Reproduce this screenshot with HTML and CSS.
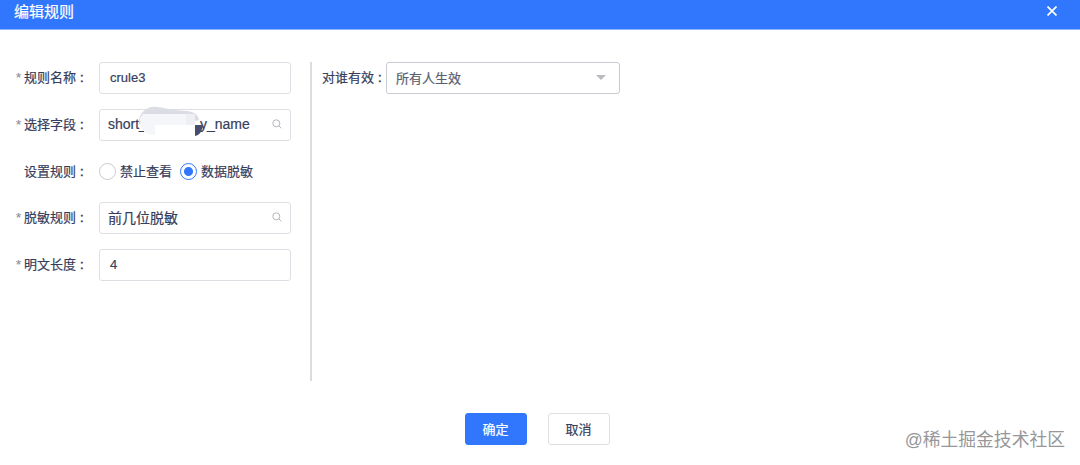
FILE: index.html
```
<!DOCTYPE html>
<html lang="zh-CN">
<head>
  <meta charset="UTF-8" />
  <meta name="viewport" content="width=device-width, initial-scale=1.0"/>
  <title>编辑规则</title>
  <link rel="stylesheet" href="styles.css">
</head>
<body>
<div class="dialog">
  <div class="dialog-header">
    <span class="title">编辑规则</span>
    <svg class="close" viewBox="0 0 10 10"><path d="M0.5 0.5 L9.5 9.5 M9.5 0.5 L0.5 9.5"/></svg>
  </div>

  <div class="dialog-body">
    <div class="form">
      <div class="form-item">
        <div class="label"><span class="star">*</span>规则名称<span class="colon">:</span></div>
        <div class="input"><span>crule3</span></div>
      </div>
      <div class="form-item">
        <div class="label"><span class="star">*</span>选择字段<span class="colon">:</span></div>
        <div class="input search">
          <span class="field-start">short_</span><span class="field-end">y_name</span>
          <svg class="icon" viewBox="0 0 10 10"><circle cx="4.3" cy="4.3" r="3.5"/><path d="M6.9 6.9 L9.3 9.3"/></svg>
          <svg class="mask" viewBox="0 0 70 34">
            <path fill="#fff" d="M5 9 H61 V30 H10 L5 20 Z"/>
            <path fill="#dcdde4" d="M3 19 C2 11 7 4 15 2 C23 1 29 4 38 5 L51 6 C58 7 62 9 63 15 L59 16 V9 H7 V19 Z"/>
            <path fill="#f5f6f9" d="M4 13 L7 9 H50 V20 H19 V30 C12 30 7 27 5 22 Z"/>
            <path fill="#eeeff4" d="M50 9 H59 V20 H50 Z"/>
            <path fill="#474d6b" d="M59 20 H67 C66 26 64 30 59 31 Z"/>
          </svg>
        </div>
      </div>
      <div class="form-item">
        <div class="label">设置规则<span class="colon">:</span></div>
        <div class="radios">
          <span class="radio"></span><span class="radio-text">禁止查看</span>
          <span class="radio checked"></span><span class="radio-text">数据脱敏</span>
        </div>
      </div>
      <div class="form-item">
        <div class="label"><span class="star">*</span>脱敏规则<span class="colon">:</span></div>
        <div class="input search">
          <span>前几位脱敏</span>
          <svg class="icon" viewBox="0 0 10 10"><circle cx="4.3" cy="4.3" r="3.5"/><path d="M6.9 6.9 L9.3 9.3"/></svg>
        </div>
      </div>
      <div class="form-item">
        <div class="label"><span class="star">*</span>明文长度<span class="colon">:</span></div>
        <div class="input"><span>4</span></div>
      </div>
    </div>

    <div class="scope">
      <div class="scope-label">对谁有效<span class="colon">:</span></div>
      <div class="select"><span>所有人生效</span><i class="arrow"></i></div>
    </div>
  </div>

  <div class="dialog-footer">
    <button class="button primary">确定</button>
    <button class="button">取消</button>
  </div>

  <div class="watermark">@稀土掘金技术社区</div>
</div>
</body>
</html>
```
FILE: styles.css
```
:root {
  --primary-color: #3177fd;
  --text-color: #373d5c;
  --border-color: #dcdfe3;
}

* {
  box-sizing: border-box;
}

body {
  margin: 0;
  font-family: "Liberation Sans", "Noto Sans CJK SC", sans-serif;
  font-size: 13px;
  color: var(--text-color);
  background: #fff;
  -webkit-text-stroke: 0.2px;
}

.dialog {
  position: relative;
  height: 465px;
  overflow: hidden;
}

.dialog-header {
  display: flex;
  justify-content: space-between;
  height: 30px;
  padding: 0 23px 0 14px;
  background: var(--primary-color);
  border-bottom: 1px solid #8fb4fc;
}

.title {
  font-size: 15px;
  line-height: 23px;
  color: #fff;
}

.close {
  width: 10px;
  height: 10px;
  margin-top: 6px;
}

.close path {
  stroke: #fff;
  stroke-width: 1.7;
}

.dialog-body {
  display: flex;
  height: 319px;
  margin-top: 32px;
}

.form {
  display: flex;
  flex-direction: column;
  gap: 14.8px;
  width: 312px;
  border-right: 2px solid #dadce1;
}

.form-item {
  display: flex;
  align-items: center;
  height: 32px;
}

.label {
  display: flex;
  justify-content: flex-end;
  align-items: center;
  width: 84px;
  margin-right: 15px;
  line-height: 20px;
  white-space: nowrap;
}

.star {
  margin-right: 3px;
  color: #8f929d;
}

.colon {
  width: 4px;
  margin-left: 4px;
  -webkit-text-stroke: 0.5px;
}

.input {
  position: relative;
  display: flex;
  align-items: center;
  width: 192px;
  height: 32px;
  padding: 0 8px 0 10px;
  border: 1px solid var(--border-color);
  border-radius: 3px;
}

.input span {
  padding-bottom: 2px;
}

.input.search {
  padding-left: 8px;
  font-size: 14px;
}

.input.search span {
  padding-bottom: 3px;
}

.input .field-start,
.input .field-end {
  padding-top: 1px;
}

.icon {
  width: 10px;
  height: 10px;
  margin-left: auto;
  margin-bottom: 2px;
  fill: none;
  stroke: #b4b6be;
  stroke-width: 1;
}

.field-end {
  margin-left: 53px;
}

/* smudge over the middle of the field name */
.mask {
  position: absolute;
  left: 36px;
  top: -5px;
  width: 70px;
  height: 34px;
}

.radios {
  display: flex;
  align-items: center;
  padding-bottom: 1px;
}

.radio {
  width: 17px;
  height: 17px;
  margin-right: 4px;
  border: 1px solid #c9cbd0;
  border-radius: 50%;
}

.radio-text {
  padding-bottom: 2px;
}

.radio.checked {
  margin-left: 8px;
  border-color: var(--primary-color);
  background: radial-gradient(circle, var(--primary-color) 4px, #fff 5px);
}

.scope {
  display: flex;
  align-items: center;
  height: 32px;
  padding-left: 10px;
}

.scope-label {
  display: flex;
  align-items: center;
  width: 64px;
  line-height: 20px;
}

.select {
  display: flex;
  justify-content: space-between;
  align-items: center;
  width: 234px;
  height: 32px;
  padding: 0 13px 0 9px;
  border: 1px solid #c7cad1;
  border-radius: 3px;
  color: #595e72;
}

.select span {
  padding-bottom: 1px;
}

.arrow {
  margin-bottom: 2px;
  border: 5px solid transparent;
  border-top-color: #b9bbc0;
  border-bottom: 0;
}

.dialog-footer {
  display: flex;
  justify-content: center;
  gap: 21px;
  margin-top: 32px;
  padding-right: 6px;
}

.button {
  width: 62px;
  height: 32px;
  padding: 0 0 2px;
  border: 1px solid var(--border-color);
  border-radius: 3px;
  background: #fff;
  color: var(--text-color);
  font: inherit;
}

.button.primary {
  border-color: var(--primary-color);
  background: var(--primary-color);
  color: #fff;
}

.watermark {
  position: absolute;
  right: 15px;
  bottom: 12px;
  font-size: 17.8px;
  line-height: 26px;
  color: #97979a;
  -webkit-text-stroke: 0;
}
```
